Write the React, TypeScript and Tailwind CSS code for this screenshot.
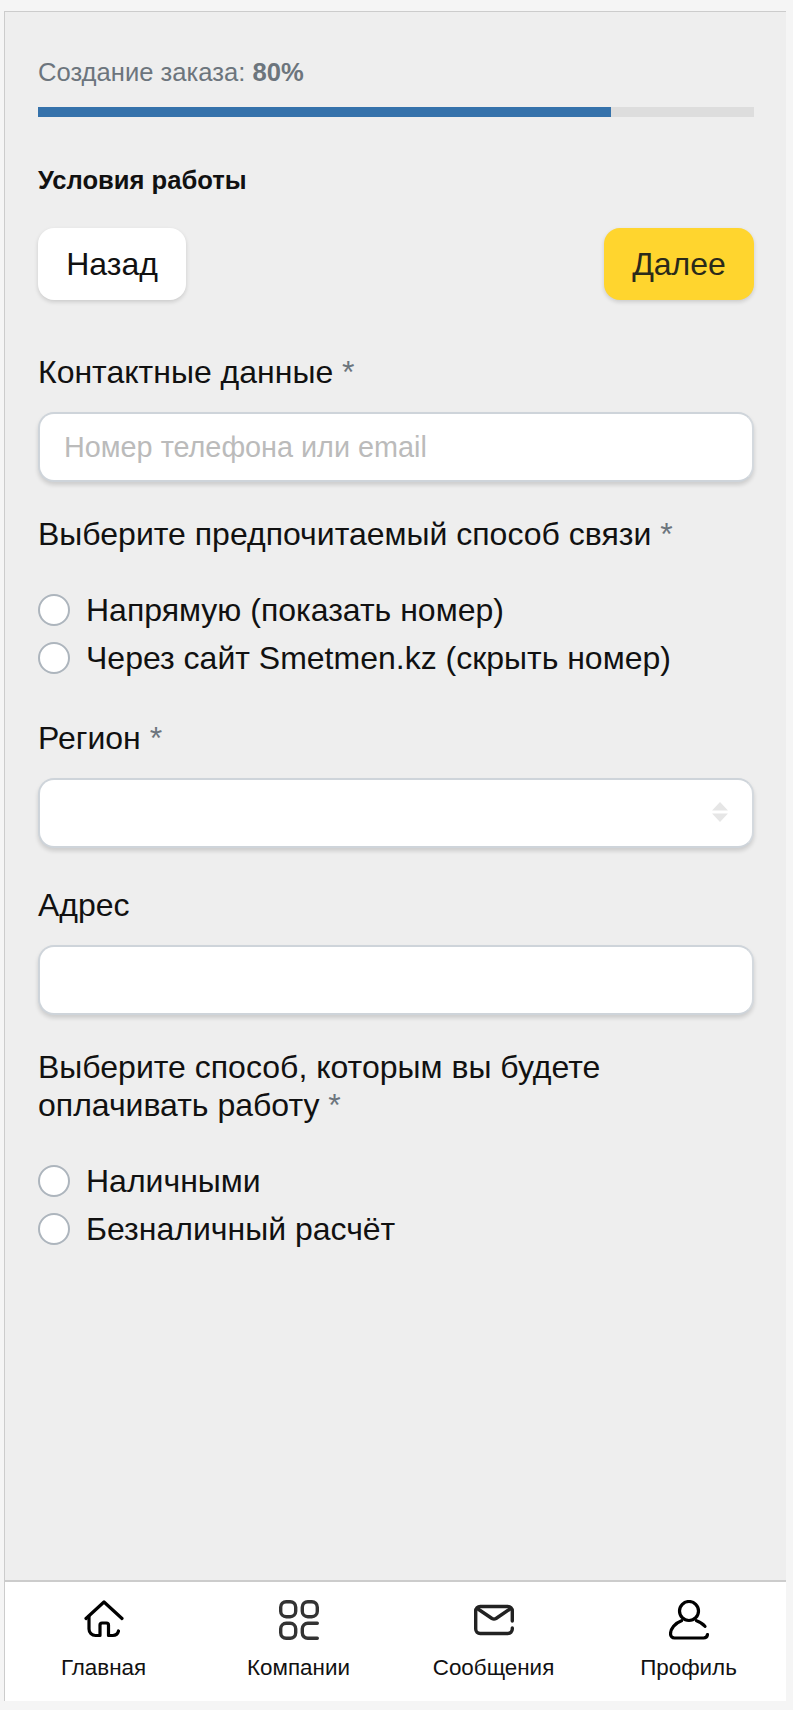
const sans = 'font-["Liberation_Sans",Arial,sans-serif]';

function Star() {
	return <span className="text-[#6c757d]"> *</span>;
}

function Field({ children }: { children?: React.ReactNode }) {
	return (
		<div className="relative h-[70px] rounded-[16px] bg-white border-2 border-[#ced4da] border-r-[#d4d9de] shadow-[0_3px_4px_rgba(0,0,0,0.14)] flex items-center px-[24px] text-[28.8px] text-[#bbbbbb]">
			{children}
		</div>
	);
}

function Radio({ label }: { label: string }) {
	return (
		<div className="flex items-center h-[48px]">
			<span className="w-[32px] h-[32px] rounded-full bg-white border-2 border-[#adb5bd] shrink-0" />
			<span className="ml-[16px] text-[32px] text-[#111111]">{label}</span>
		</div>
	);
}

function HomeIcon() {
	return (
		<svg width="40" height="40" viewBox="0 0 40 40" fill="none" stroke="#000" strokeWidth="3.2" strokeLinecap="round" strokeLinejoin="round">
			<path d="M2 18.500 20 2 38 18.500" />
			<path d="M5 16.500v12.500a6.500 6.500 0 0 0 6.500 6.500h4.500V25a2 2 0 0 1 2-2h4.500a2 2 0 0 1 2 2v10.500h4a6 6 0 0 0 6-4.500" />
		</svg>
	);
}

function CompaniesIcon() {
	return (
		<svg width="40" height="40" viewBox="0 0 40 40" fill="none" stroke="#333" strokeWidth="3.4" strokeLinecap="round">
			<rect x="1.700" y="1.700" width="15" height="15" rx="5.500" />
			<rect x="23.300" y="1.700" width="15" height="15" rx="5.500" />
			<rect x="1.700" y="23.300" width="15" height="15" rx="5.500" />
			<path d="M38.300 23.300h-9.500a5.500 5.500 0 0 0-5.500 5.500v4a5.500 5.500 0 0 0 5.500 5.500h9.500" />
		</svg>
	);
}

function MailIcon() {
	return (
		<svg width="40" height="40" viewBox="0 0 40 40" fill="none" stroke="#222" strokeWidth="3.4" strokeLinecap="round" strokeLinejoin="round">
			<path d="M38.300 21V11a4.500 4.500 0 0 0-4.500-4.500H6.200A4.500 4.500 0 0 0 1.700 11v18a4.500 4.500 0 0 0 4.500 4.500h27.600a4.500 4.500 0 0 0 4.500-4.500v-1" />
			<path d="M4 9l14 9.500a4 4 0 0 0 4 0L36 9" />
		</svg>
	);
}

function ProfileIcon() {
	return (
		<svg width="40" height="40" viewBox="0 0 40 40" fill="none" stroke="#000" strokeWidth="3.2" strokeLinecap="round" strokeLinejoin="round">
			<circle cx="20" cy="11" r="9.500" />
			<path d="M12.500 20.700C6 23 1.500 29 1.500 34a4 4 0 0 0 4 4h29a4 4 0 0 0 4-3.500" />
			<path d="M27.500 20.700c3.500 1.200 6.500 3 8.500 5.700" />
		</svg>
	);
}

function NavItem({ label, icon }: { label: string; icon: React.ReactNode }) {
	return (
		<div className="flex-1 flex flex-col items-center">
			{icon}
			<span className="mt-[15px] text-[22.4px] leading-[26px] text-[#111111]">{label}</span>
		</div>
	);
}

export default function App() {
	return (
		<div className={`${sans} min-h-screen bg-[#f5f5f5] pt-[11px] pb-[9px] pl-[4px] pr-[7px] flex flex-col`}>
			<div className="flex-1 flex flex-col bg-[#eeeeee] border-t border-l border-[#cccccc]">
				<div className="flex-1 pl-[33px] pr-[32px]">
					<div className="mt-[45px] text-[25.6px] leading-[30px] text-[#6c757d]">
						Создание заказа: <b>80%</b>
					</div>
					<div className="mt-[20px] h-[10px] bg-[#dddddd]">
						<div className="h-full w-[80%] bg-[#3572ab]" />
					</div>
					<div className="mt-[48px] text-[25.6px] leading-[30px] font-bold text-[#111111]">Условия работы</div>
					<div className="mt-[33px] flex justify-between">
						<button className="h-[72px] w-[148px] rounded-[16px] bg-white text-[32px] text-[#111111] shadow-[0_2px_4px_rgba(0,0,0,0.15)]">Назад</button>
						<button className="h-[72px] w-[150px] rounded-[16px] bg-[#ffd52e] text-[32px] text-[#2a2a1a] shadow-[0_2px_4px_rgba(0,0,0,0.15)]">Далее</button>
					</div>
					<div className="mt-[53px] text-[32px] leading-[38.4px] text-[#111111]">
						Контактные данные<Star />
					</div>
					<div className="mt-[21px]">
						<Field>Номер телефона или email</Field>
					</div>
					<div className="mt-[33px] text-[32px] leading-[38.4px] text-[#111111]">
						Выберите предпочитаемый способ связи<Star />
					</div>
					<div className="mt-[32px]">
						<Radio label="Напрямую (показать номер)" />
						<Radio label="Через сайт Smetmen.kz (скрыть номер)" />
					</div>
					<div className="mt-[37px] text-[32px] leading-[38.4px] text-[#111111]">
						Регион<Star />
					</div>
					<div className="mt-[21px]">
						<Field>
							<svg className="absolute right-[24px] top-[22px]" width="16" height="20" viewBox="0 0 16 20" fill="#e6e6e6">
								<path d="M8 0 16 8.500H0ZM0 11.500H16L8 20Z" />
							</svg>
						</Field>
					</div>
					<div className="mt-[38px] text-[32px] leading-[38.4px] text-[#111111]">Адрес</div>
					<div className="mt-[20px]">
						<Field />
					</div>
					<div className="mt-[33px] text-[32px] leading-[38.4px] text-[#111111]">
						Выберите способ, которым вы будете
						<br />
						оплачивать работу<Star />
					</div>
					<div className="mt-[33px]">
						<Radio label="Наличными" />
						<Radio label="Безналичный расчёт" />
					</div>
				</div>
				<div className="h-[121px] bg-white border-t-2 border-[#cccccc] flex pt-[18px] pl-[1px]">
					<NavItem label="Главная" icon={<HomeIcon />} />
					<NavItem label="Компании" icon={<CompaniesIcon />} />
					<NavItem label="Сообщения" icon={<MailIcon />} />
					<NavItem label="Профиль" icon={<ProfileIcon />} />
				</div>
			</div>
		</div>
	);
}
